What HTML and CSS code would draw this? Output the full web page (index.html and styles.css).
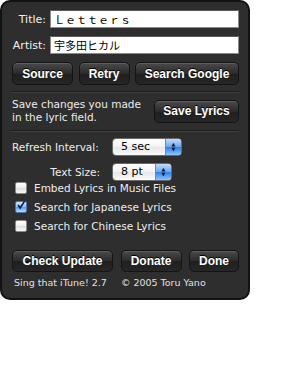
FILE: index.html
```html
<!DOCTYPE html>
<html lang="en">
<head>
  <meta charset="UTF-8" />
  <title>Sing that iTune!</title>
  <link rel="stylesheet" href="styles.css">
</head>
<body>
  <div class="panel">
    <div class="fields">
      <label class="field-label">Title:</label>
      <div class="text-field">Ｌｅｔｔｅｒｓ</div>
      <label class="field-label">Artist:</label>
      <div class="text-field">宇多田ヒカル</div>
    </div>

    <div class="button-row top-buttons">
      <button class="btn btn-source">Source</button>
      <button class="btn btn-retry">Retry</button>
      <button class="btn btn-google">Search Google</button>
    </div>

    <div class="separator"></div>

    <div class="save-row">
      <p class="save-note">Save changes you made<br>in the lyric field.</p>
      <button class="btn btn-save">Save Lyrics</button>
    </div>

    <div class="separator"></div>

    <div class="prefs">
      <span class="pref-label">Refresh Interval:</span>
      <div class="popup popup-wide">
        <span class="popup-value">5 sec</span>
        <span class="popup-cap"><span>▲</span><span>▼</span></span>
      </div>
      <span class="pref-label">Text Size:</span>
      <div class="popup popup-narrow">
        <span class="popup-value">8 pt</span>
        <span class="popup-cap"><span>▲</span><span>▼</span></span>
      </div>
    </div>

    <ul class="checks">
      <li><span class="checkbox"></span>Embed Lyrics in Music Files</li>
      <li>
        <span class="checkbox checked">
          <svg viewBox="0 0 12 12" width="12" height="12"><path d="M2.5 6 L5 9.5 L10.5 1" fill="none" stroke="#0b1f5c" stroke-width="2"/></svg>
        </span>Search for Japanese Lyrics
      </li>
      <li><span class="checkbox"></span>Search for Chinese Lyrics</li>
    </ul>

    <div class="button-row bottom-buttons">
      <button class="btn btn-update">Check Update</button>
      <button class="btn btn-donate">Donate</button>
      <button class="btn btn-done">Done</button>
    </div>

    <div class="footer">Sing that iTune! 2.7<span class="copy">© 2005 Toru Yano</span></div>
  </div>
</body>
</html>
```

FILE: styles.css
```css
* {
  box-sizing: border-box;
}

html, body {
  margin: 0;
  background: #fff;
  font-family: 'DejaVu Sans', Verdana, sans-serif;
}

.panel {
  width: 250px;
  height: 300px;
  background: #2e2e2e;
  border: 2px solid #121212;
  border-radius: 10px;
  padding: 8px 9px 0 10px;
  color: #ececec;
  font-size: 10.5px;
  display: flex;
  flex-direction: column;
}

.fields {
  display: grid;
  grid-template-columns: 34px 1fr;
  column-gap: 4px;
  row-gap: 8px;
  align-items: center;
}

.field-label {
  text-align: right;
  font-size: 11px;
  color: #f0f0f0;
}

.text-field {
  height: 18px;
  background: #fff;
  border: 1px solid #8a8a8a;
  border-top-color: #5a5a5a;
  color: #000;
  padding: 0 3px;
  font-family: 'Noto Sans CJK JP', sans-serif;
  font-size: 11px;
  line-height: 16px;
}

.button-row {
  display: flex;
  justify-content: space-between;
}

.top-buttons {
  margin-top: 8px;
}

.btn {
  height: 23px;
  padding: 0;
  border: 1px solid #141414;
  border-radius: 5px;
  background: linear-gradient(#4a4a4a, #2b2b2b 50%, #1f1f1f 51%, #262626);
  box-shadow: inset 0 1px 0 rgba(255,255,255,0.12);
  color: #fff;
  font-family: 'Liberation Sans', Arial, sans-serif;
  font-weight: bold;
  font-size: 12px;
  text-shadow: 0 -1px 0 #000;
}

.btn-source { width: 61px; }
.btn-retry { width: 51px; }
.btn-google { width: 104px; }
.btn-save { width: 85px; }
.btn-update { width: 101px; }
.btn-donate { width: 61px; }
.btn-done { width: 50px; }

.bottom-buttons .btn {
  height: 22px;
}

.separator {
  height: 2px;
  border-top: 1px solid #1e1e1e;
  border-bottom: 1px solid #3e3e3e;
  margin: 6px 0 5px;
}

.save-row {
  display: flex;
  justify-content: space-between;
  align-items: center;
}

.save-note {
  margin: 0;
  font-size: 10.5px;
  line-height: 13px;
  color: #ececec;
}

.prefs {
  display: grid;
  grid-template-columns: 88px 1fr;
  column-gap: 12px;
  row-gap: 7px;
  align-items: center;
  margin-top: 1px;
}

.pref-label {
  text-align: right;
  white-space: nowrap;
}

.pref-label:first-child {
  text-align: left;
}

.popup {
  height: 18px;
  display: flex;
  border-radius: 4px;
  overflow: hidden;
  border: 1px solid #6a6a6a;
  background: linear-gradient(#ffffff, #f2f2f2 50%, #e6e6e6 51%, #fafafa);
  color: #000;
}

.popup-wide { width: 70px; }
.popup-narrow { width: 60px; }

.popup-value {
  flex: 1;
  padding-left: 8px;
  font-size: 11px;
  line-height: 16px;
}

.popup-cap {
  width: 16px;
  display: flex;
  flex-direction: column;
  align-items: center;
  justify-content: center;
  background: linear-gradient(#c3dcf8, #6aa6ec 50%, #2f7fe0 51%, #8fc4ff);
  border-left: 1px solid #5c8cc8;
  color: #0a1a3a;
  font-size: 5px;
  line-height: 5px;
}

.checks {
  list-style: none;
  margin: -3px 0 0;
  padding: 0 0 0 3px;
}

.checks li {
  height: 19px;
  display: flex;
  align-items: center;
  gap: 7px;
  font-size: 10.5px;
}

.checkbox {
  width: 12px;
  height: 12px;
  border-radius: 2px;
  border: 1px solid #8a8a8a;
  background: linear-gradient(#ffffff, #ececec 50%, #dcdcdc 51%, #f8f8f8);
  display: flex;
}

.checkbox.checked {
  background: linear-gradient(#d6e8fc, #8cbcf0 50%, #5a9ae8 51%, #b8d8ff);
  border-color: #4a76b0;
}

.checkbox svg {
  margin: -3px 0 0 0;
}

.bottom-buttons {
  margin-top: 15px;
}

.footer {
  margin-top: 5px;
  padding-left: 2px;
  font-size: 9.5px;
  color: #e0e0e0;
}

.copy {
  margin-left: 14px;
}
```
